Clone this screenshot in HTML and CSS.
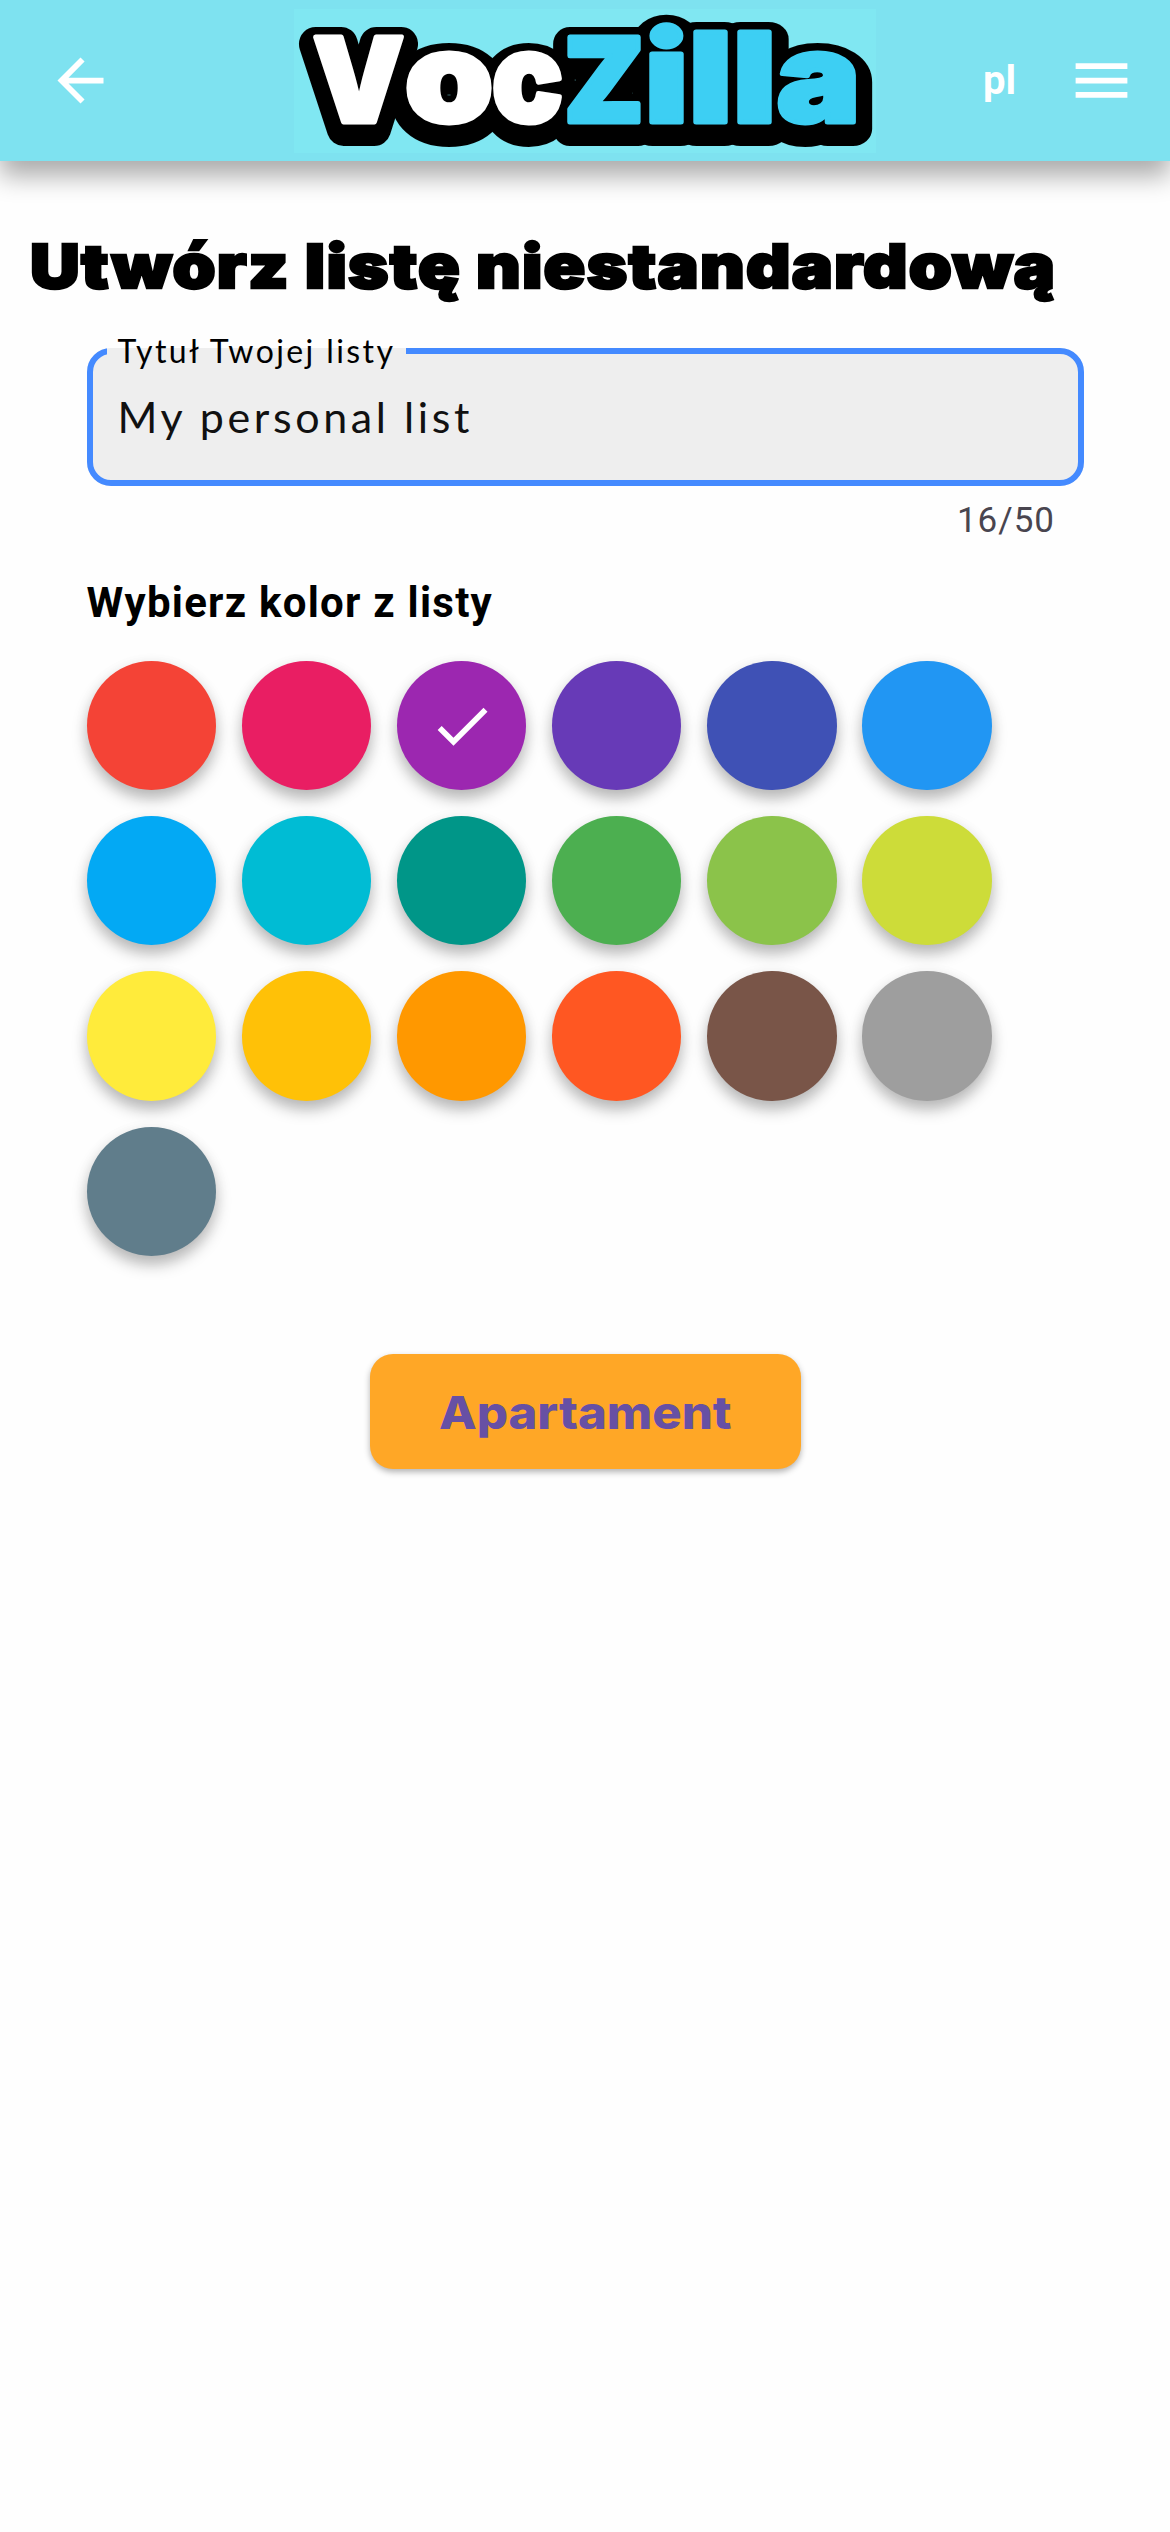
FILE: index.html
```html
<!DOCTYPE html>
<html lang="pl">
<head>
<meta charset="utf-8">
<title>VocZilla</title>
<link rel="stylesheet" href="styles.css">
</head>
<body>
<header class="bar">
  <svg class="icon back" viewBox="0 0 24 24"><path d="M20 11H7.83l5.59-5.59L12 4l-8 8 8 8 1.41-1.41L7.83 13H20v-2z"/></svg>
  <svg class="logo" viewBox="294 9 582 144" role="img" aria-label="VocZilla">
    <defs>
      <g id="word">
        <text class="cap" x="313" y="122" textLength="91" lengthAdjust="spacingAndGlyphs">V</text>
        <text class="low" x="405" y="122" textLength="88" lengthAdjust="spacingAndGlyphs">o</text>
        <text class="low" x="492" y="122" textLength="71" lengthAdjust="spacingAndGlyphs">c</text>
      </g>
      <g id="zilla">
        <text class="cap" x="564" y="122" textLength="80" lengthAdjust="spacingAndGlyphs">Z</text>
        <text class="low" x="645" y="122" textLength="43" lengthAdjust="spacingAndGlyphs">i</text>
        <text class="low" x="689" y="122" textLength="43" lengthAdjust="spacingAndGlyphs">l</text>
        <text class="low" x="733" y="122" textLength="43" lengthAdjust="spacingAndGlyphs">l</text>
        <text class="low" x="777" y="122" textLength="83" lengthAdjust="spacingAndGlyphs">a</text>
      </g>
    </defs>
    <g class="outline" transform="translate(0 6.5)"><use href="#word"/><use href="#zilla"/></g>
    <use class="white" href="#word"/>
    <use class="blue" href="#zilla"/>
  </svg>
  <span class="lang">pl</span>
  <svg class="icon menu" viewBox="0 0 24 24"><path d="M3 18h18v-2H3v2zm0-5h18v-2H3v2zm0-7v2h18V6H3z"/></svg>
</header>
<main class="page">
  <h1 class="title">Utwórz listę niestandardową</h1>
  <section class="form">
    <fieldset class="field">
      <legend class="label">Tytuł Twojej listy</legend>
      <div class="value">My personal list</div>
    </fieldset>
    <div class="counter">16/50</div>
    <h2 class="subtitle">Wybierz kolor z listy</h2>
    <div class="swatches">
      <i class="dot red"></i><i class="dot pink"></i><i class="dot purple"><svg class="check" viewBox="0 0 24 24"><path d="M9 16.17L4.83 12l-1.42 1.41L9 19 21 7l-1.41-1.41z"/></svg></i><i class="dot deep-purple"></i><i class="dot indigo"></i><i class="dot azure"></i>
      <i class="dot sky"></i><i class="dot cyan"></i><i class="dot teal"></i><i class="dot green"></i><i class="dot light-green"></i><i class="dot lime"></i>
      <i class="dot yellow"></i><i class="dot amber"></i><i class="dot orange"></i><i class="dot deep-orange"></i><i class="dot brown"></i><i class="dot grey"></i>
      <i class="dot blue-grey"></i>
    </div>
  </section>
  <button class="submit" type="button"><span class="submit-text">Apartament</span></button>
</main>
</body>
</html>
```
FILE: styles.css
```css
* { box-sizing: border-box; }
body { margin: 0; background: #fefefe; font-family: Roboto, sans-serif; color: #000; min-height: 2532px; }
.bar {
  height: 161px; display: flex; align-items: center; padding-left: 46px;
  background: #7ee2f0; box-shadow: 0 15px 24px rgba(0,0,0,.33);
}
.icon { width: 69px; height: 69px; fill: #fff; flex: none; }
.logo { width: 582px; height: 144px; margin-left: 179px; background: #80e7f2; overflow: visible; flex: none; }
.logo text { font-family: Inter, sans-serif; font-weight: 900; }
.cap { font-size: 117px; }
.low { font-size: 124px; }
.outline { fill: #000; stroke: #000; stroke-width: 34px; stroke-linejoin: round; }
.white { fill: #fff; stroke: #fff; stroke-width: 5px; stroke-linejoin: round; }
.blue { fill: #3dcff3; stroke: #3dcff3; stroke-width: 5px; stroke-linejoin: round; }
.lang { width: 34px; margin-left: 107px; font-size: 40px; font-weight: 700; line-height: 48px; color: #fff; }
.menu { margin-left: 50px; }
.page { display: flex; flex-direction: column; }
.title {
  align-self: flex-start; margin: 68px 0 0 30px; font: 900 61px/74px Inter, sans-serif; letter-spacing: 1.1px;
  white-space: nowrap; -webkit-text-stroke: 2.5px #000; transform: scaleX(1.13); transform-origin: 0 0;
}
.form { padding: 0 86px 0 86.5px; margin-top: 25px; }
.field {
  margin: 0; height: 158px; padding: 13px 24px 0 25px; border: 6px solid #448aff; border-radius: 24px;
  background: #eee; min-width: 0;
}
.label { padding: 0 11px 0 11px; margin-left: -11px; height: 46px; font: 32px/46px Lato, sans-serif; letter-spacing: 2.4px; white-space: nowrap; }
.value { font: 43px/60px Lato, sans-serif; letter-spacing: 3.6px; color: #111; }
.counter { margin-top: 14px; padding-right: 29px; text-align: right; font-size: 35px; line-height: 42px; letter-spacing: 1px; color: #49454f; }
.subtitle { margin: 36px 0 0; font-size: 42px; line-height: 50px; font-weight: 700; letter-spacing: 1.25px; white-space: nowrap; }
.swatches { display: grid; grid-template-columns: repeat(6, 129.3px); gap: 25.9px; margin-top: 33px; }
.dot { height: 129.3px; border-radius: 50%; box-shadow: 0 9px 15px rgba(0,0,0,.26), 0 3px 15px rgba(0,0,0,.06); display: flex; align-items: center; justify-content: center; }
.check { width: 68px; height: 68px; fill: #fff; }
.red { background: #f44336; } .pink { background: #e91e63; } .purple { background: #9c27b0; }
.deep-purple { background: #673ab7; } .indigo { background: #3f51b5; } .azure { background: #2196f3; }
.sky { background: #03a9f4; } .cyan { background: #00bcd4; } .teal { background: #009688; }
.green { background: #4caf50; } .light-green { background: #8bc34a; } .lime { background: #cddc39; }
.yellow { background: #ffeb3b; } .amber { background: #ffc107; } .orange { background: #ff9800; }
.deep-orange { background: #ff5722; } .brown { background: #795548; } .grey { background: #9e9e9e; }
.blue-grey { background: #607d8b; }
.submit {
  align-self: center; margin-top: 98px; width: 431px; height: 115px; padding: 4px 0 0; border: 0; border-radius: 23px;
  background: #ffa726; color: #6750a4; font: 800 45px/60px Inter, sans-serif;
  box-shadow: 0 3px 6px rgba(0,0,0,.3);
}
.submit-text { display: inline-block; transform: scaleX(1.09); }
```
